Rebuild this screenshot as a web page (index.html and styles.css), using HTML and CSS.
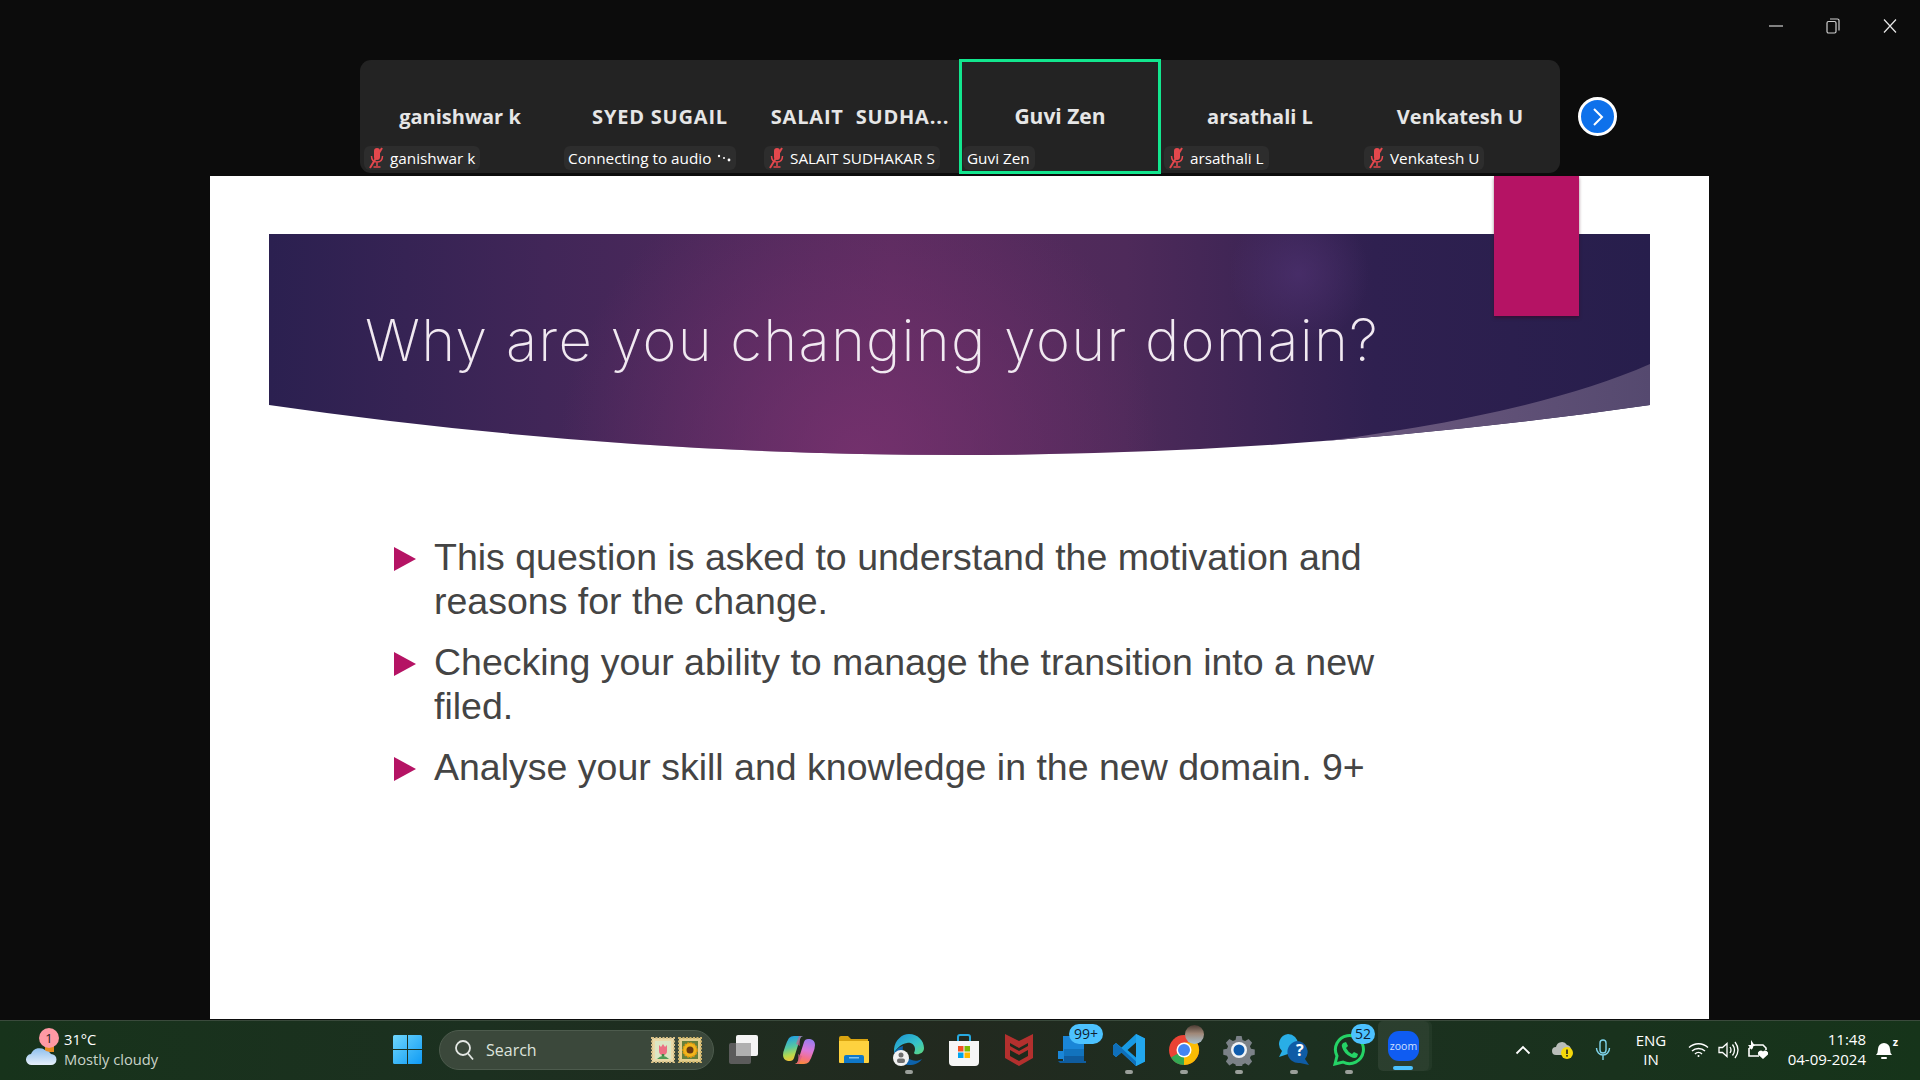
FILE: index.html
```html
<!DOCTYPE html>
<html>
  <head>
    <title>Zoom Meeting</title>
    <link rel="stylesheet" href="styles.css">
  </head>

  <body>
    <svg class="defs" width="0" height="0">
      <symbol id="muted" viewBox="0 0 16 22">
        <rect x="6" y="1" width="6" height="12" rx="3" fill="#e5484d"/>
        <path d="M3.5 9c0 4 2.5 6 5.500 6s5.500-2 5.500-6M9 15v4M5.500 20h7" fill="none" stroke="#e5484d" stroke-width="1.500"/>
        <path d="M14 1L2 21" stroke="#e5484d" stroke-width="2"/>
      </symbol>
    </svg>

    <div id="meeting">
      <div id="window-controls">
        <svg width="16" height="16" viewBox="0 0 16 16"><path d="M1 8h14" stroke="#a8a8a8" stroke-width="1.500"/></svg>
        <svg width="16" height="16" viewBox="0 0 16 16" fill="none" stroke="#d0d0d0" stroke-width="1.200"><rect x="2" y="3.500" width="9" height="11.500" rx="1.500"/><path d="M5 1h7.500a1.500 1.500 0 0 1 1.500 1.500v10"/></svg>
        <svg width="16" height="16" viewBox="0 0 16 16"><path d="M2 1.500l12 13M14 1.500l-12 13" stroke="#e8e8e8" stroke-width="1.200"/></svg>
      </div>

      <div id="film-row">
        <div id="film-strip">
          <div class="tile">
            <div class="tile-name">ganishwar k</div>
            <div class="pill"><svg class="mic"><use href="#muted"/></svg>ganishwar k</div>
          </div>
          <div class="tile">
            <div class="tile-name tile-caps">SYED SUGAIL</div>
            <div class="pill">Connecting to audio
              <svg class="dots" width="14" height="8" viewBox="0 0 14 8"><circle cx="2" cy="2" r="1.200"/><circle cx="7" cy="4" r="1"/><circle cx="12" cy="6" r="1.400"/></svg>
            </div>
          </div>
          <div class="tile">
            <div class="tile-name tile-caps">SALAIT  SUDHA...</div>
            <div class="pill"><svg class="mic"><use href="#muted"/></svg>SALAIT SUDHAKAR S</div>
          </div>
          <div class="tile tile-active">
            <div class="tile-name">Guvi Zen</div>
            <div class="pill">Guvi Zen</div>
          </div>
          <div class="tile">
            <div class="tile-name">arsathali L</div>
            <div class="pill"><svg class="mic"><use href="#muted"/></svg>arsathali L</div>
          </div>
          <div class="tile">
            <div class="tile-name">Venkatesh U</div>
            <div class="pill"><svg class="mic"><use href="#muted"/></svg>Venkatesh U</div>
          </div>
        </div>
        <button id="next-button" type="button">
          <svg width="14" height="20" viewBox="0 0 14 20"><path d="M3 2l8 8-8 8" fill="none" stroke="#fff" stroke-width="2"/></svg>
        </button>
      </div>

      <div id="slide">
        <div class="slide-tab"></div>
        <div class="banner">
          <svg class="banner-bg" viewBox="0 0 1381 221" preserveAspectRatio="none">
            <defs>
              <linearGradient id="banner-base" x1="0" x2="1" y1="0" y2="0">
                <stop offset="0" stop-color="#2b2050"/>
                <stop offset="0.2" stop-color="#412658"/>
                <stop offset="0.45" stop-color="#582b5e"/>
                <stop offset="0.62" stop-color="#4e2a5a"/>
                <stop offset="0.8" stop-color="#2f2050"/>
                <stop offset="1" stop-color="#271e4c"/>
              </linearGradient>
              <radialGradient id="banner-glow" gradientUnits="userSpaceOnUse" cx="590" cy="221" r="300">
                <stop offset="0" stop-color="#7a3270" stop-opacity="0.8"/>
                <stop offset="1" stop-color="#7a3270" stop-opacity="0"/>
              </radialGradient>
              <radialGradient id="banner-spot" gradientUnits="userSpaceOnUse" cx="1030" cy="40" r="70">
                <stop offset="0" stop-color="#4d3170" stop-opacity="0.7"/>
                <stop offset="1" stop-color="#4d3170" stop-opacity="0"/>
              </radialGradient>
              <linearGradient id="banner-swoosh" x1="0" x2="1" y1="0" y2="0">
                <stop offset="0" stop-color="#705c82"/>
                <stop offset="1" stop-color="#55496f"/>
              </linearGradient>
              <clipPath id="banner-shape"><path d="M0 0H1381V171Q690 271 0 171Z"/></clipPath>
            </defs>
            <g clip-path="url(#banner-shape)">
              <rect width="1381" height="221" fill="url(#banner-base)"/>
              <rect width="1381" height="221" fill="url(#banner-glow)"/>
              <rect width="1381" height="221" fill="url(#banner-spot)"/>
              <path d="M1381 130C1290 170 1160 195 1017 212V221H1381Z" fill="url(#banner-swoosh)"/>
            </g>
          </svg>
          <h1 class="slide-title">Why are you changing your domain?</h1>
        </div>
        <ul class="points">
          <li><span>This question is asked to understand the motivation and reasons for the change.</span></li>
          <li><span>Checking your ability to manage the transition into a new filed.</span></li>
          <li><span>Analyse your skill and knowledge in the new domain. 9+</span></li>
        </ul>
      </div>
    </div>

    <div id="taskbar">
      <div class="weather">
        <div class="weather-icon">
          <svg width="32" height="24" viewBox="0 0 32 24">
            <defs><linearGradient id="cloud" x1="0" x2="0" y1="0" y2="1"><stop offset="0" stop-color="#8fc0ee"/><stop offset="1" stop-color="#e6effa"/></linearGradient></defs>
            <rect x="20" y="0" width="9" height="9" fill="#e68a1e"/>
            <path d="M7 22a5.500 5.500 0 0 1-1-11 9 9 0 0 1 15-3 6 6 0 0 1 5 3 5.500 5.500 0 0 1 0 11z" fill="url(#cloud)"/>
          </svg>
          <span class="weather-badge">1</span>
        </div>
        <div class="weather-text">
          <div>31°C</div>
          <div class="weather-sub">Mostly cloudy</div>
        </div>
      </div>

      <div class="start-button">
        <svg width="29" height="29" viewBox="0 0 29 29">
          <defs><linearGradient id="win" x1="0" x2="1" y1="0" y2="1"><stop offset="0" stop-color="#6fd6fb"/><stop offset="1" stop-color="#0f9bf5"/></linearGradient></defs>
          <path d="M0 1.500A1.500 1.500 0 0 1 1.500 0H14V14H0zM15 0H27.500A1.500 1.500 0 0 1 29 1.500V14H15zM0 15H14V29H1.500A1.500 1.500 0 0 1 0 27.500zM15 15H29V27.500A1.500 1.500 0 0 1 27.500 29H15z" fill="url(#win)"/>
        </svg>
      </div>

      <div class="search-box">
        <svg width="20" height="22" viewBox="0 0 20 22" fill="none" stroke="#e4e8e4" stroke-width="1.800"><circle cx="9" cy="9" r="7"/><path d="M14 14.500l5 6"/></svg>
        <span class="search-label">Search</span>
        <svg class="stamp" width="24" height="26" viewBox="0 0 24 26"><rect x="1" y="1" width="22" height="24" fill="#e9d9a8" stroke="#d8c088" stroke-width="2" stroke-dasharray="2 1.500"/><rect x="4" y="4" width="16" height="18" fill="#dbe6c4"/><path d="M8 8l2 2 2-3 2 3 2-2v6a4 4 0 0 1-8 0z" fill="#ec6f82"/><path d="M12 17v5" stroke="#3f8a45" stroke-width="2.500"/><path d="M6 22q6-6 12 0" fill="#4f9a55"/></svg>
        <svg class="stamp" width="24" height="26" viewBox="0 0 24 26"><rect x="1" y="1" width="22" height="24" fill="#e4cf8e" stroke="#d0b56c" stroke-width="2" stroke-dasharray="2 1.500"/><rect x="4" y="4" width="16" height="18" fill="#66803c"/><circle cx="12" cy="13" r="7" fill="#f2b61c" stroke="#e89a10" stroke-width="1.500" stroke-dasharray="2 1"/><circle cx="12" cy="13" r="3.500" fill="#6a3a12"/></svg>
      </div>

      <div class="task-apps">
        <div class="app">
          <svg width="32" height="30" viewBox="0 0 32 30"><rect x="1" y="8" width="22" height="21" rx="2" fill="#5b5b5b"/><rect x="8" y="0" width="22" height="21" rx="2" fill="#f4f4f4"/><rect x="8" y="8" width="15" height="13" fill="#b0b0b0"/></svg>
        </div>
        <div class="app">
          <svg width="32" height="32" viewBox="0 0 32 32">
            <defs>
              <linearGradient id="cop-a" x1="0.3" x2="0.5" y1="0" y2="1"><stop offset="0" stop-color="#1f9de6"/><stop offset="0.45" stop-color="#58c8a0"/><stop offset="0.75" stop-color="#b8d84c"/><stop offset="1" stop-color="#f8c037"/></linearGradient>
              <linearGradient id="cop-b" x1="0.6" x2="0.4" y1="0" y2="1"><stop offset="0" stop-color="#9a7cf0"/><stop offset="0.45" stop-color="#dc78d8"/><stop offset="0.75" stop-color="#f4708a"/><stop offset="1" stop-color="#f98a3c"/></linearGradient>
            </defs>
            <path d="M11 2h9q-2 0-3 3l-6 19q-1 3-4 3H5q-5-1-5-6 0-3 2-8 2-6 4-9 2-2 5-2z" fill="url(#cop-a)"/>
            <path d="M21 30h-9q2 0 3-3l6-19q1-3 4-3h2q5 1 5 6 0 3-2 8-2 6-4 9-2 2-5 2z" fill="url(#cop-b)"/>
            <path d="M17 5q1-3 3-3h-4l-3 8 4 2zM15 27q-1 3-3 3h4l3-8-4-2z" fill="#d4588a" opacity="0.6"/>
          </svg>
        </div>
        <div class="app">
          <svg width="32" height="28" viewBox="0 0 32 28"><path d="M1 2q0-2 2-2h7l3 3h17v6H1z" fill="#d9a410"/><path d="M1 5h30v21q0 1-1 1H2q-1 0-1-1z" fill="#fed23f"/><path d="M6 27v-6q0-2 2-2h16q2 0 2 2v6z" fill="#0f78c9"/><rect x="11" y="21" width="10" height="1.500" fill="#7fc2ee"/></svg>
        </div>
        <div class="app app-open">
          <svg width="32" height="32" viewBox="0 0 32 32">
            <defs><linearGradient id="edge" x1="0" x2="1" y1="0" y2="1"><stop offset="0" stop-color="#1b8fd6"/><stop offset="0.6" stop-color="#36c4c8"/><stop offset="1" stop-color="#5fd67a"/></linearGradient></defs>
            <path d="M1 15C2 6 9 0 16 0c9 0 15 7 15 14 0 5-5 7-9 6-2-1 0-2 0-5 0-4-4-7-8-6C8 10 4 14 1 19z" fill="url(#edge)"/>
            <path d="M1 15c0 9 7 16 15 16 6 0 10-2 13-6-5 3-10 2-14-1C11 21 9 16 10 12 5 13 2 17 1 19z" fill="#0d62ab"/>
            <circle cx="8" cy="24" r="8" fill="#f2f2f2"/><circle cx="8" cy="21" r="2.500" fill="#6f6f6f"/><rect x="4" y="24.500" width="8" height="4.500" rx="2" fill="#6f6f6f"/>
          </svg>
        </div>
        <div class="app">
          <svg width="30" height="32" viewBox="0 0 30 32"><path d="M9 7V3q0-2 2-2h8q2 0 2 2v4" fill="none" stroke="#27a9e0" stroke-width="2"/><path d="M0 7h30v21q0 4-4 4H4q-4 0-4-4z" fill="#f6f6f6"/><rect x="9" y="12" width="5.500" height="5.500" fill="#f25022"/><rect x="15.500" y="12" width="5.500" height="5.500" fill="#7fba00"/><rect x="9" y="18.500" width="5.500" height="5.500" fill="#00a4ef"/><rect x="15.500" y="18.500" width="5.500" height="5.500" fill="#ffb900"/></svg>
        </div>
        <div class="app">
          <svg width="28" height="32" viewBox="0 0 28 32"><path d="M0 0l14 7 14-7v24l-14 8-14-8z" fill="#b3302e"/><path d="M5 9l9 5 9-5v3l-9 5-9-5z" fill="#1d2a1c"/><path d="M5 16l9 5 9-5v6l-9 5-9-5z" fill="#1d2a1c"/></svg>
        </div>
        <div class="app">
          <svg width="32" height="34" viewBox="0 0 32 34"><path d="M0 18h5V3h21v26H5v-3H0z" fill="#1a86d8"/><rect x="6" y="16" width="20" height="7" fill="#1273bd"/><rect x="6" y="23" width="20" height="7" fill="#0f5c9e"/><path d="M0 28h28v2H2z" fill="#0f5c9e"/></svg>
          <span class="app-badge badge-wide">99+</span>
        </div>
        <div class="app app-open">
          <svg width="32" height="32" viewBox="0 0 32 32"><path d="M23 0l9 4.500v23L23 32 8.500 18.500 3 23l-3-2.500V11.500L3 9l5.500 4.500zM23 8.500l-8.500 7.500 8.500 7.500z" fill="#189ae4"/><path d="M23 0l9 4.500v23L23 32z" fill="#22a7ee"/><path d="M0 11.500L3 9l20 18.500V32L8.500 18.500 3 23l-3-2.500z" fill="#0f6fba"/></svg>
        </div>
        <div class="app app-open">
          <svg width="32" height="32" viewBox="0 0 32 32"><circle cx="16" cy="16" r="15" fill="#ea4335"/><path d="M16 16L3 23.500A15 15 0 0 0 16 31z" fill="#34a853"/><path d="M16 16V31A15 15 0 0 0 29 8.500H16z" fill="#fbbc04"/><circle cx="16" cy="16" r="7.500" fill="#fff"/><circle cx="16" cy="16" r="6" fill="#4285f4"/></svg>
          <span class="avatar"></span>
        </div>
        <div class="app app-open">
          <svg width="32" height="32" viewBox="0 0 32 32"><path d="M13 0h6l1 4.500 3 1.300 4-2.500 4 4.500-2.500 4 1.200 2.700 4.300 1v6l-4.300 1-1.200 2.700 2.500 4-4 4.500-4-2.500-3 1.300-1 4.500h-6l-1-4.500-3-1.300-4 2.500-4-4.500 2.500-4-1.200-2.700-4.300-1v-6l4.300-1 1.200-2.700-2.500-4 4-4.500 4 2.500 3-1.300z" fill="#7b8187" transform="translate(2 2) scale(.875)"/><circle cx="16" cy="16" r="8" fill="#f2f4f6"/><circle cx="16" cy="16" r="5.500" fill="#0f5cad"/></svg>
        </div>
        <div class="app app-open">
          <svg width="32" height="32" viewBox="0 0 32 32"><path d="M10 0a10 10 0 0 1 10 10c0 6-5 10-10 10l-9 3 3-6a10 10 0 0 1 6-17z" fill="#29aee6"/><path d="M19 7a11 11 0 0 1 8 18l4 6-9-2a11 11 0 1 1-3-22z" fill="#0f5ca6"/></svg>
          <span class="help-mark">?</span>
        </div>
        <div class="app app-open">
          <svg width="32" height="32" viewBox="0 0 32 32"><path d="M2 30l2-8A14 14 0 1 1 10 28z" fill="none" stroke="#25d366" stroke-width="3"/><path d="M10 9l3-1 2 4-2 2q2 4 6 6l2-2 4 2-1 3q-2 2-6 0-7-3-9-10-1-2 1-4z" fill="#25d366"/></svg>
          <span class="app-badge">52</span>
        </div>
        <div class="app app-active">
          <span class="zoom-icon">zoom</span>
        </div>
      </div>

      <div class="tray">
        <div class="tray-icon">
          <svg width="16" height="10" viewBox="0 0 16 10"><path d="M1.500 8.500L8 2l6.500 6.500" fill="none" stroke="#fff" stroke-width="1.800"/></svg>
        </div>
        <div class="tray-icon">
          <svg width="22" height="20" viewBox="0 0 22 20"><path d="M4 15a4 4 0 0 1 0-8 6 6 0 0 1 11-2 5 5 0 0 1 4 4v6z" fill="#b9bdb9"/><circle cx="15" cy="13" r="6" fill="#f5d90a"/><rect x="14.200" y="9.500" width="1.600" height="4.500" fill="#222"/><rect x="14.200" y="15" width="1.600" height="1.600" fill="#222"/></svg>
        </div>
        <div class="tray-icon">
          <svg width="16" height="22" viewBox="0 0 16 22" fill="none" stroke="#7fd4ec" stroke-width="1.400"><rect x="5" y="1" width="6" height="13" rx="3"/><path d="M1.500 9c0 4 3 7 6.500 7s6.500-3 6.500-7M8 16v5"/></svg>
        </div>
        <div class="tray-lang">ENG<br>IN</div>
        <div class="tray-small">
          <svg width="21" height="16" viewBox="0 0 21 16" fill="none" stroke="#fff" stroke-width="1.400"><path d="M1 5.500a14 14 0 0 1 19 0M4 9a9.500 9.500 0 0 1 13 0M7 12a5 5 0 0 1 7 0"/><circle cx="10.500" cy="14" r="1" fill="#fff" stroke="none"/></svg>
        </div>
        <div class="tray-small">
          <svg width="21" height="18" viewBox="0 0 21 18" fill="none" stroke="#fff" stroke-width="1.300"><path d="M1 6.500h3.500L9 2.500v13l-4.500-4H1z"/><path d="M12 6q2 3 0 6M14.500 3.500q4 5.500 0 11M17 1q6 8 0 16"/></svg>
        </div>
        <div class="tray-small">
          <svg width="22" height="20" viewBox="0 0 22 20"><path d="M2 8h3l1-3h10l3 3v2" fill="none" stroke="#fff" stroke-width="1.600"/><path d="M2 8v8h10" fill="none" stroke="#fff" stroke-width="1.600"/><path d="M5 0v5H2l4 5V6h3z" fill="#fff" transform="translate(-1 0)"/><path d="M16 19l-5-4.500a3 3 0 0 1 5-3 3 3 0 0 1 5 3z" fill="#fff"/></svg>
        </div>
        <div class="clock">11:48<br>04-09-2024</div>
        <div class="tray-bell">
          <svg width="18" height="22" viewBox="0 0 18 22"><path d="M1 16q2-2 2-6a6 6 0 0 1 12 0q0 4 2 6z" fill="#fff"/><rect x="6" y="18" width="6" height="2" rx="1" fill="#fff"/></svg>
          <span class="bell-z">z</span>
        </div>
      </div>
    </div>
  </body>
</html>
```

FILE: styles.css
```css
* {
  box-sizing: border-box;
}

html,
body {
  height: 100%;
}

body {
  margin: 0;
  display: flex;
  flex-direction: column;
  overflow: hidden;
  background-color: #0c0c0c;
  color: #ffffff;
  font-family: 'Open Sans', 'Noto Sans', sans-serif;
}

.defs {
  position: absolute;
}

/* meeting area */

#meeting {
  flex: 1;
  display: flex;
  flex-direction: column;
  padding-bottom: 1px;
}

#window-controls {
  height: 60px;
  padding: 18px 22px 0 0;
  display: flex;
  justify-content: flex-end;
  gap: 41px;
}

#film-row {
  height: 113px;
  margin-bottom: 3px;
  padding-left: 360px;
  display: flex;
  align-items: center;
}

#film-strip {
  width: 1200px;
  height: 113px;
  display: flex;
  background-color: #232323;
  border-radius: 11px;
}

.tile {
  width: 200px;
  display: flex;
  flex-direction: column;
  padding: 0 0 3px 4px;
}

.tile-active {
  width: 202px;
  height: 115px;
  margin: -1px -1px 0;
  padding: 0 0 1px 1px;
  border: 3px solid #12e68e;
  position: relative;
}

.tile-name {
  flex: 1;
  padding: 43px 4px 0 0;
  font-size: 20px;
  line-height: 28px;
  font-weight: 700;
  color: #e6e6e6;
  text-align: center;
  white-space: pre;
}

.tile-caps {
  letter-spacing: 0.8px;
}

.tile-active .tile-name {
  padding: 40px 1px 0 0;
  font-size: 21px;
}

.pill {
  align-self: flex-start;
  height: 24px;
  padding: 0 5px 0 4px;
  display: flex;
  align-items: center;
  gap: 6px;
  background-color: #2d2d2d;
  border-radius: 6px;
  font-size: 15.300px;
  color: #ffffff;
  white-space: nowrap;
}

.mic {
  width: 16px;
  height: 22px;
}

.dots {
  fill: #ffffff;
}

#next-button {
  width: 39px;
  height: 39px;
  margin-left: 18px;
  padding: 0;
  display: flex;
  align-items: center;
  justify-content: center;
  background-color: #0e71eb;
  border: 3px solid #ffffff;
  border-radius: 50%;
}

/* slide */

#slide {
  flex: 1;
  width: 1499px;
  margin-left: 210px;
  padding: 58px 59px 0;
  background-color: #ffffff;
  position: relative;
}

.slide-tab {
  position: absolute;
  top: 0;
  left: 1284px;
  width: 85px;
  height: 140px;
  background-color: #b51364;
  box-shadow: 0 2px 3px rgba(60, 0, 30, 0.5);
  z-index: 1;
}

.banner {
  height: 221px;
  padding: 71px 0 0 96px;
  position: relative;
}

.banner-bg {
  position: absolute;
  top: 0;
  left: 0;
  width: 100%;
  height: 100%;
}

.slide-title {
  margin: 0;
  position: relative;
  font-family: 'Inter', sans-serif;
  font-size: 58px;
  line-height: 70px;
  font-weight: 200;
  letter-spacing: 1.200px;
  color: #f1e9f1;
  white-space: nowrap;
}

.points {
  margin: 80px 0 0;
  padding: 0 0 0 125px;
  list-style: none;
  font-family: 'Liberation Sans', Arial, sans-serif;
  font-size: 37.500px;
  line-height: 44px;
  color: #444444;
}

.points li {
  width: 1000px;
  margin-bottom: 17px;
  display: flex;
  gap: 18px;
}

.points li::before {
  content: "";
  flex: none;
  width: 0;
  height: 0;
  margin-top: 12px;
  border-left: 22px solid #b51364;
  border-top: 12.500px solid transparent;
  border-bottom: 12.500px solid transparent;
}

/* taskbar */

#taskbar {
  height: 60px;
  flex: none;
  display: flex;
  align-items: center;
  padding: 0 0 2px 25px;
  background: linear-gradient(90deg, #17331b 0%, #1c3020 25%, #22291f 50%, #1c3020 68%, #16341a 100%);
  border-top: 1px solid #3a4a3c;
}

.weather {
  width: 365px;
  display: flex;
  align-items: center;
  gap: 7px;
}

.weather-icon {
  width: 32px;
  height: 40px;
  padding-top: 13px;
  position: relative;
}

.weather-badge {
  position: absolute;
  top: -2px;
  left: 14px;
  width: 20px;
  height: 20px;
  background-color: #ff99a4;
  border-radius: 50%;
  color: #2a1a1a;
  font-size: 13px;
  line-height: 20px;
  text-align: center;
}

.weather-text {
  margin-top: -2px;
  font-size: 14.700px;
  line-height: 20px;
}

.weather-sub {
  color: #c9d3c9;
}

.start-button {
  width: 35px;
  display: flex;
  justify-content: center;
}

.search-box {
  width: 275px;
  height: 40px;
  margin-left: 14px;
  padding: 0 11px 0 14px;
  display: flex;
  align-items: center;
  gap: 3px;
  background-color: #3b483b;
  border: 1px solid #4d5b4d;
  border-radius: 20px;
}

.search-label {
  flex: 1;
  margin-left: 9px;
  font-size: 16px;
  color: #dde3dd;
}

.task-apps {
  margin-left: 2px;
  display: flex;
}

.app {
  width: 55px;
  height: 57px;
  display: flex;
  align-items: center;
  justify-content: center;
  position: relative;
}

.app-open::after {
  content: "";
  position: absolute;
  left: 23.500px;
  bottom: 4px;
  width: 8px;
  height: 4px;
  background-color: #9a9f9a;
  border-radius: 2px;
}

.app-badge {
  position: absolute;
  top: 3px;
  left: 30px;
  min-width: 23px;
  height: 20px;
  padding: 0 4px;
  background-color: #4cc2ff;
  border-radius: 10px;
  color: #102030;
  font-size: 14px;
  line-height: 20px;
  text-align: center;
}

.badge-wide {
  left: 23px;
  width: 34px;
}

.avatar {
  position: absolute;
  top: 4px;
  left: 29px;
  width: 19px;
  height: 19px;
  background: linear-gradient(180deg, #4a3a32 0%, #a08878 45%, #a8c4d4 100%);
  border-radius: 50%;
}

.help-mark {
  position: absolute;
  top: 18px;
  left: 30px;
  font-size: 16px;
  line-height: 22px;
  font-weight: 700;
  color: #ffffff;
}

.app-active {
  background-color: rgba(255, 255, 255, 0.07);
  border-radius: 5px;
  box-shadow: 3px 0 0 rgba(255, 255, 255, 0.04);
  width: 51px;
  height: 50px;
  margin-left: 2px;
}

.app-active::after {
  content: "";
  position: absolute;
  left: 15px;
  bottom: 1px;
  width: 20px;
  height: 4px;
  background-color: #4cc2ff;
  border-radius: 2px;
}

.zoom-icon {
  width: 31px;
  height: 30px;
  background-color: #0f5cf2;
  border-radius: 11px;
  font-size: 10.500px;
  line-height: 30px;
  color: #cfe0ff;
  text-align: center;
}

.tray {
  margin-left: auto;
  padding-right: 20px;
  display: flex;
  align-items: center;
}

.tray-icon {
  width: 40px;
  display: flex;
  justify-content: center;
}

.tray-lang {
  width: 56px;
  margin-right: 4px;
  font-size: 15px;
  line-height: 19px;
  text-align: center;
}

.tray-small {
  width: 30px;
  display: flex;
  justify-content: center;
}

.clock {
  width: 93px;
  margin: -2px 2px 0 0;
  font-size: 15px;
  line-height: 20px;
  text-align: right;
}

.tray-bell {
  width: 32px;
  display: flex;
  justify-content: center;
  position: relative;
}

.bell-z {
  position: absolute;
  top: -5px;
  right: 2px;
  font-size: 11px;
  font-weight: 700;
  color: #ffffff;
}
```
